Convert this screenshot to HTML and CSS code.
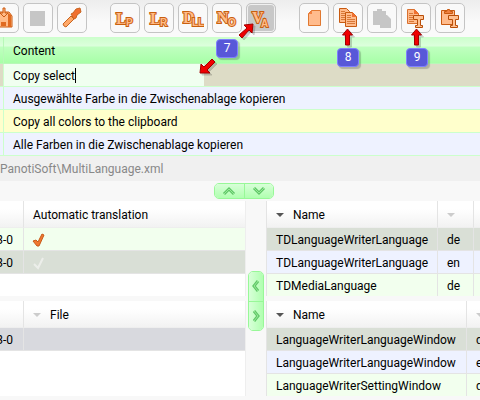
FILE: index.html
```
<!DOCTYPE html>
<html lang="en">
<head>
    <meta charset="utf-8">
    <title>MultiLanguage</title>
    <link rel="stylesheet" href="styles.css">
</head>
<body>

<div class="toolbar">
    <div class="group">
        <button class="tool" aria-label="Package">
            <svg width="22" height="22" viewBox="0 0 22 22"><path d="M4 9l3-4h9l3 4v11H4z" fill="#ffbb88" stroke="#cc5a10"/><path d="M15 6l3 2v12h-3z" fill="#e06a20"/><path d="M10 1h2v5h3l-4 4-4-4h3z" fill="#ffbb88" stroke="#cc5a10"/><path d="M8 15h5v4H8z" fill="#e06a20"/></svg>
        </button>
        <button class="tool" aria-label="Stop">
            <svg width="22" height="22" viewBox="0 0 22 22"><path d="M3 4h15v15H3z" fill="#c6c6c6"/></svg>
        </button>
        <button class="tool" aria-label="Settings">
            <svg width="22" height="22" viewBox="0 0 22 22"><path d="M2 17l8-8 3 3-8 8-2-1z" fill="#ffa868" stroke="#c86420"/><path d="M10 7l2-1 3-4 4-1 1 4-4 3-1 3-2 1z" fill="#f07030" stroke="#c86420"/></svg>
        </button>
    </div>
    <div class="group">
        <button class="tool" aria-label="LP">
            <svg class="letters" width="22" height="22" viewBox="0 0 22 22"><text class="big" x="2" y="17">L</text><text class="small" x="12" y="19">P</text></svg>
        </button>
        <button class="tool" aria-label="LR">
            <svg class="letters" width="22" height="22" viewBox="0 0 22 22"><text class="big" x="2" y="17">L</text><text class="small" x="12" y="19">R</text></svg>
        </button>
        <button class="tool" aria-label="DLL">
            <svg class="letters" width="22" height="22" viewBox="0 0 22 22"><text class="big" x="1" y="16">D</text><text class="small" x="10" y="19">LL</text></svg>
        </button>
        <button class="tool" aria-label="NO">
            <svg class="letters" width="22" height="22" viewBox="0 0 22 22"><text class="big" x="1" y="16">N</text><text class="small" x="12" y="19">O</text></svg>
        </button>
        <button class="tool pressed" aria-label="VA" aria-pressed="true">
            <svg class="letters" width="22" height="22" viewBox="0 0 22 22"><text class="big" x="2" y="16">V</text><text class="small" x="11" y="20">A</text></svg>
        </button>
    </div>
    <div class="group">
        <button class="tool" aria-label="New">
            <svg width="22" height="22" viewBox="0 0 22 22"><path d="M8.500 3.500h9v15h-12v-12z" fill="#ffbb8c" stroke="#e07830"/><path d="M5 7l4-4v4z" fill="#f08040"/></svg>
        </button>
        <button class="tool" aria-label="Copy">
            <svg width="22" height="22" viewBox="0 0 22 22"><path d="M2.500 1.500h7l3 3v11h-10z" fill="#ffbb8c" stroke="#c85a10"/><path d="M4 4.500h4M4 6.500h5M4 8.500h4M4 10.500h4M4 12.500h4" stroke="#d87838"/><path d="M8.500 5.500h7l4 4v10h-11z" fill="#ffbb8c" stroke="#c85a10"/><path d="M15 5l5 5h-5z" fill="#f07030"/><path d="M10 8.500h4M10 10.500h4M10 12.500h8M10 14.500h8M10 16.500h8" stroke="#d87838"/></svg>
        </button>
        <button class="tool" aria-label="Paste">
            <svg width="22" height="22" viewBox="0 0 22 22"><path d="M2 4h4V2h5v2h4v4h1l4 4v9H9v-3H2z" fill="#c6c6c6"/></svg>
        </button>
        <button class="tool" aria-label="Copy text">
            <svg width="22" height="22" viewBox="0 0 22 22"><path d="M2.500 2.500h7l4 4v10h-11z" fill="#ffbb8c" stroke="#d87030"/><path d="M9 2l5 5H9z" fill="#f07030"/><path d="M4 6.500h4M4 8.500h4M4 10.500h4M4 12.500h4M4 14.500h5" stroke="#d87838"/><path d="M8.500 8.500h10v4h-3v6h2v2h-7v-2h2v-6h-4z" fill="#ffc090" stroke="#b84e08"/></svg>
        </button>
        <button class="tool" aria-label="Paste text">
            <svg width="22" height="22" viewBox="0 0 22 22"><path d="M2.500 3.500h13v14h-13z" fill="#ffbb8c" stroke="#c85a10"/><path d="M5.500 6.500v-2h2l1-2h2l1 2h2v2z" fill="#f08040" stroke="#c85a10"/><path d="M9.500 8.500h10v4h-3v6h2v2h-7v-2h2v-6h-4z" fill="#ffc090" stroke="#b84e08"/></svg>
        </button>
    </div>
</div>

<table class="content">
    <colgroup><col class="edge"><col></colgroup>
    <thead>
        <tr><th></th><th>Content</th></tr>
    </thead>
    <tbody>
        <tr class="editing"><td></td><td><input class="editor" type="text" value="Copy select" aria-label="Content"></td></tr>
        <tr class="blue"><td></td><td>Ausgewählte Farbe in die Zwischenablage kopieren</td></tr>
        <tr class="yellow"><td></td><td>Copy all colors to the clipboard</td></tr>
        <tr class="blue"><td></td><td>Alle Farben in die Zwischenablage kopieren</td></tr>
    </tbody>
</table>

<div class="path">PanotiSoft\MultiLanguage.xml</div>

<div class="splitbar">
    <div class="splitter">
        <button aria-label="Up"><svg width="14" height="10" viewBox="0 0 14 10"><path class="rim" d="M2 8l5-5 5 5"/><path class="core" d="M2 8l5-5 5 5"/></svg></button>
        <button aria-label="Down"><svg width="14" height="10" viewBox="0 0 14 10"><path class="rim" d="M2 2l5 5 5-5"/><path class="core" d="M2 2l5 5 5-5"/></svg></button>
    </div>
</div>

<div class="panels">
    <div class="side left">
        <div class="panel">
            <table class="list shifted">
                <colgroup><col class="version"><col></colgroup>
                <thead>
                    <tr><th></th><th>Automatic translation</th></tr>
                </thead>
                <tbody>
                    <tr class="green"><td class="num">3-0</td><td class="state"><svg class="check" width="14" height="14" viewBox="0 0 14 14"><path d="M1 8l3-1 2 2 4-8 2 1-5 11H5z" fill="#f07830" stroke="#c85a18"/></svg></td></tr>
                    <tr class="selected"><td class="num">3-0</td><td class="state"><svg class="check" width="14" height="14" viewBox="0 0 14 14"><path d="M2 8l4 4 5-10" fill="none" stroke="#eceeea" stroke-width="2"/></svg></td></tr>
                </tbody>
            </table>
        </div>
        <div class="panel">
            <table class="list shifted">
                <colgroup><col class="version"><col></colgroup>
                <thead>
                    <tr><th></th><th><span class="arrow"></span>File</th></tr>
                </thead>
                <tbody>
                    <tr class="inactive"><td class="num">3-0</td><td></td></tr>
                </tbody>
            </table>
        </div>
    </div>

    <div class="gutter">
        <div class="splitter vertical">
            <button aria-label="Left"><svg width="10" height="14" viewBox="0 0 10 14"><path class="rim" d="M7 2L3 7l4 5"/><path class="core" d="M7 2L3 7l4 5"/></svg></button>
            <button aria-label="Right"><svg width="10" height="14" viewBox="0 0 10 14"><path class="rim" d="M3 2l4 5-4 5"/><path class="core" d="M3 2l4 5-4 5"/></svg></button>
        </div>
    </div>

    <div class="side right">
        <div class="panel">
            <table class="list">
                <colgroup><col class="name"><col class="lang"><col></colgroup>
                <thead>
                    <tr><th><span class="arrow dark"></span>Name</th><th><span class="arrow"></span></th><th></th></tr>
                </thead>
                <tbody>
                    <tr class="selected"><td>TDLanguageWriterLanguage</td><td>de</td><td></td></tr>
                    <tr class="blue"><td>TDLanguageWriterLanguage</td><td>en</td><td></td></tr>
                    <tr class="green"><td>TDMediaLanguage</td><td>de</td><td></td></tr>
                </tbody>
            </table>
        </div>
        <div class="panel">
            <table class="list">
                <colgroup><col class="window"><col></colgroup>
                <thead>
                    <tr><th><span class="arrow dark"></span>Name</th><th><span class="arrow"></span></th></tr>
                </thead>
                <tbody>
                    <tr class="selected"><td>LanguageWriterLanguageWindow</td><td>de</td></tr>
                    <tr class="blue"><td>LanguageWriterLanguageWindow</td><td>en</td></tr>
                    <tr class="green"><td>LanguageWriterSettingWindow</td><td>de</td></tr>
                </tbody>
            </table>
        </div>
    </div>
</div>

<!-- numbered callouts -->
<svg class="pointer p7a" width="18" height="18" viewBox="0 0 18 18"><path d="M16 1l-1 9-3-3-7 8-3-3 8-7-3-3z"/></svg>
<svg class="pointer p7b" width="18" height="18" viewBox="0 0 18 18"><path d="M1 16l1-9 3 3 8-8 3 3-8 8 3 3z"/></svg>
<span class="badge b7">7</span>
<svg class="pointer p8" width="14" height="20" viewBox="0 0 14 20"><path d="M6.500 1l5 6h-3v10h-4v-10h-3z"/></svg>
<span class="badge b8">8</span>
<svg class="pointer p9" width="14" height="20" viewBox="0 0 14 20"><path d="M6.500 1l5 6h-3v10h-4v-10h-3z"/></svg>
<span class="badge b9">9</span>

</body>
</html>
```
FILE: styles.css
```
*{
    box-sizing:border-box;
}
body{
    margin:0;
    min-height:100vh;
    position:relative;
    overflow:hidden;
    background:#f8f8f8;
    color:#000;
    font:12px/16px Roboto, "Open Sans", sans-serif;
}
button, input{
    margin:0;
    padding:0;
    font:inherit;
    color:inherit;
}

/* toolbar */
.toolbar{
    display:flex;
    gap:23px;
    height:37px;
    padding:3px 0;
    margin-left:-11px;
    background:linear-gradient(#ededed, #fafafa 60%);
}
.group{
    display:flex;
    gap:4px;
}
.tool{
    flex:none;
    display:flex;
    align-items:center;
    justify-content:center;
    width:30px;
    height:30px;
    border:1px solid #c4c4c4;
    border-radius:5px;
    background:#f9f9f9;
}
.pressed{
    background:#c8c8c8;
    box-shadow:inset 0 0 0 1px #f0f0f0;
}
.letters{
    font-family:"Liberation Serif", serif;
    font-weight:bold;
    fill:#ffbb88;
    stroke:#c86010;
    stroke-width:2;
    paint-order:stroke;
}
.big{
    font-size:16px;
}
.small{
    font-family:"Liberation Sans", sans-serif;
    font-size:10px;
}

/* tables */
table{
    width:100%;
    table-layout:fixed;
    border-collapse:separate;
    border-spacing:0;
}
th, td{
    height:23px;
    padding:1px 0 0 9px;
    border-right:1px solid #e4e4e4;
    border-bottom:1px solid #e4e4e4;
    text-align:left;
    font-weight:normal;
    white-space:nowrap;
    overflow:hidden;
}
th:last-child, td:last-child{
    border-right:0;
}
th{
    height:27px;
    padding-top:2px;
}
.edge{
    width:4px;
}
.content th{
    background:linear-gradient(#ccffcc, #dcffdc 9px, #c0ffc0 10px, #a8ffa8);
    border-color:#b8f8b8;
}
.content td{
    border-color:#ccffcc;
}
.content th:first-child, .content td:first-child{
    padding:0;
}
.blue{
    background:#eef2ff;
}
.yellow{
    background:#ffffcc;
}
.green{
    background:#f2ffee;
}
.selected{
    background:#d9dfd6;
}
.inactive{
    background:#d8d9de;
}
.editing{
    background:#dddcc6;
}
.editing td:last-child{
    padding:0;
}
.editor{
    display:block;
    width:200px;
    height:22px;
    padding:1px 9px 0;
    border:0;
    background:linear-gradient(#000, #000) 71px 4px / 1px 15px no-repeat, #f0fff0;
}

.path{
    height:25px;
    padding-top:5px;
    background:#f0f0f0;
    color:#888;
}

/* splitters */
.splitbar{
    display:flex;
    justify-content:center;
    height:20px;
    padding:2px 0 2px 8px;
}
.splitter{
    display:flex;
    width:60px;
    height:16px;
    border:1px solid #98f898;
    border-radius:5px;
    overflow:hidden;
}
.splitter button{
    flex:1;
    display:flex;
    align-items:center;
    justify-content:center;
    border:0;
    background:linear-gradient(#d8ffd8, #b0ffb0);
}
.splitter button + button{
    border-left:1px solid #98f898;
}
.splitter path{
    fill:none;
}
.rim{
    stroke:#60c868;
    stroke-width:3;
}
.core{
    stroke:#98e898;
    stroke-width:1;
}
.vertical{
    flex-direction:column;
    width:16px;
    height:60px;
}
.vertical button{
    background:linear-gradient(to right, #d8ffd8, #b0ffb0);
}
.vertical button + button{
    border-left:0;
    border-top:1px solid #98f898;
}

/* lower panels */
.panels{
    display:flex;
}
.side{
    display:flex;
    flex-direction:column;
    gap:5px;
    min-width:0;
}
.left{
    flex:0 0 246px;
}
.gutter{
    flex:0 0 20px;
    display:flex;
    align-items:center;
    justify-content:center;
    padding-top:5px;
}
.right{
    flex:1;
}
.panel{
    height:95px;
    overflow:hidden;
    background:#fff;
    border-right:1px solid #eee;
}
.right .panel{
    border-right:0;
    border-left:1px solid #e4e4e4;
}
.list th{
    background:linear-gradient(#fff 30%, #f2f2f2);
    border-bottom-color:#eee;
}
.shifted{
    width:calc(100% + 40px);
    margin-left:-40px;
}
.version{
    width:64px;
}
.name{
    width:171px;
}
.lang{
    width:36px;
}
.window{
    width:200px;
}
.num{
    padding-right:10px;
    text-align:right;
}
.state{
    padding-left:8px;
}
.check{
    display:block;
}
.arrow{
    display:inline-block;
    margin-right:9px;
    vertical-align:2px;
    border:4px solid transparent;
    border-top-color:#ccc;
    border-bottom:0;
}
.dark{
    border-top-color:#555;
}

/* callouts */
.badge{
    position:absolute;
    width:22px;
    height:19px;
    border:1px solid #8080ff;
    border-radius:4px;
    background:#5858d8;
    box-shadow:2px 2px 1px rgba(0,0,0,.2);
    color:#fff;
    text-align:center;
    line-height:17px;
}
.pointer{
    position:absolute;
    fill:#f00000;
    stroke:#a00000;
    filter:drop-shadow(2px 2px 0 rgba(0,0,0,.18));
}
.b7{
    left:216px;
    top:39px;
}
.b8{
    left:337px;
    top:48px;
}
.b9{
    left:406px;
    top:48px;
}
.p7a{
    left:237px;
    top:23px;
}
.p7b{
    left:199px;
    top:57px;
}
.p8{
    left:341px;
    top:28px;
}
.p9{
    left:410px;
    top:28px;
}
```
